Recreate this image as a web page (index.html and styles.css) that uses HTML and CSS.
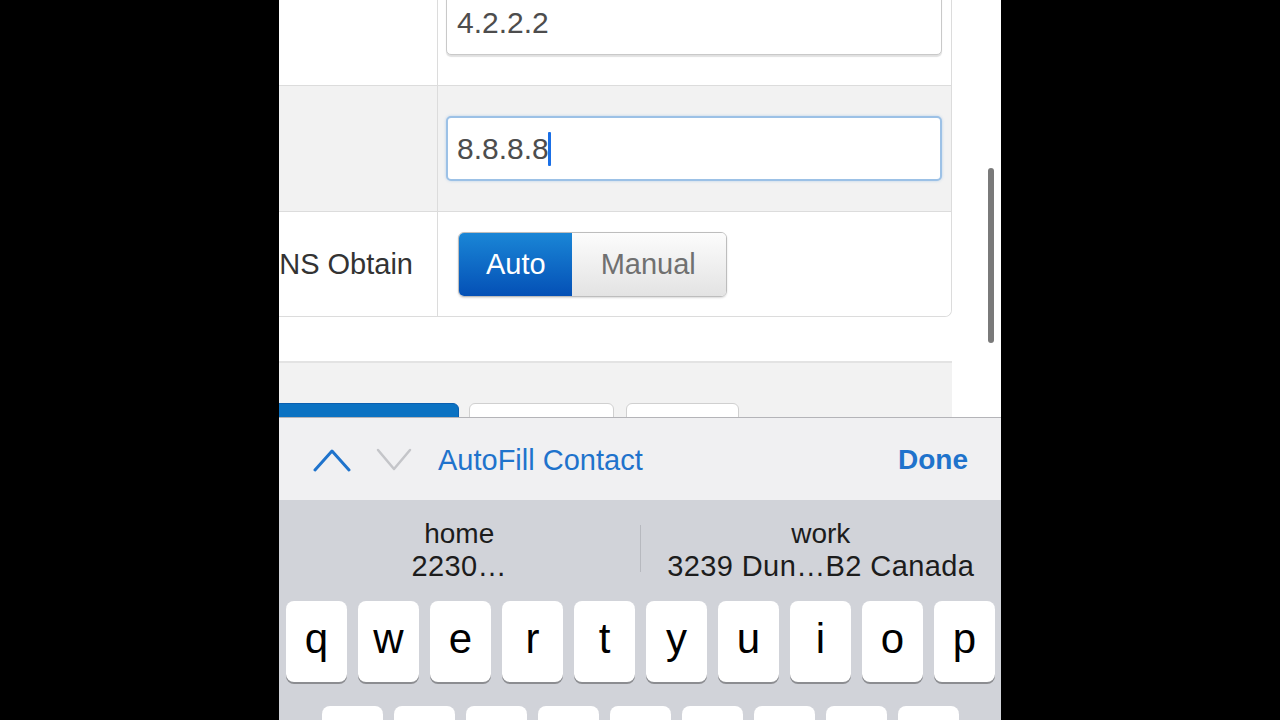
FILE: index.html
```html
<!DOCTYPE html>
<html lang="en">
<head>
    <meta charset="UTF-8">
    <meta name="viewport" content="width=device-width, initial-scale=1.0">
    <title>DNS Settings</title>
    <link rel="stylesheet" href="styles.css">
</head>
<body>
    <div class="screen">
        <div class="page">
            <div class="page-inner">
                <div class="form-table">
                    <div class="row">
                        <div class="label"></div>
                        <div class="field">
                            <div class="input">4.2.2.2</div>
                        </div>
                    </div>
                    <div class="row row-alt">
                        <div class="label"></div>
                        <div class="field">
                            <div class="input input-focus">8.8.8.8<span class="caret"></span></div>
                        </div>
                    </div>
                    <div class="row row-last">
                        <div class="label"><span>DNS Obtain</span></div>
                        <div class="field field-short">
                            <div class="segmented">
                                <span class="seg seg-on">Auto</span>
                                <span class="seg seg-manual">Manual</span>
                            </div>
                        </div>
                    </div>
                </div>

                <div class="actions">
                    <span class="btn btn-primary"></span>
                    <span class="btn btn-wide"></span>
                    <span class="btn btn-small"></span>
                </div>
            </div>
            <div class="scrollbar"></div>
        </div>

        <div class="accessory">
            <svg class="chevron" width="38" height="24" viewBox="0 0 38 24">
                <polyline points="2,22 19,3 36,22" fill="none" stroke="#1f73cc" stroke-width="3" stroke-linecap="round" stroke-linejoin="round"/>
            </svg>
            <svg class="chevron chevron-down" width="36" height="24" viewBox="0 0 36 24">
                <polyline points="2,2 18,21 34,2" fill="none" stroke="#c4c5c9" stroke-width="2.5" stroke-linecap="round" stroke-linejoin="round"/>
            </svg>
            <span class="autofill">AutoFill Contact</span>
            <span class="done">Done</span>
        </div>

        <div class="suggestions">
            <div class="suggestion">
                <div>home</div>
                <div class="address">2230…</div>
            </div>
            <div class="divider"></div>
            <div class="suggestion">
                <div>work</div>
                <div class="address">3239 Dun…B2 Canada</div>
            </div>
        </div>

        <div class="keyboard">
            <div class="key-row">
                <span class="key">q</span>
                <span class="key">w</span>
                <span class="key">e</span>
                <span class="key">r</span>
                <span class="key">t</span>
                <span class="key">y</span>
                <span class="key">u</span>
                <span class="key">i</span>
                <span class="key">o</span>
                <span class="key">p</span>
            </div>
            <div class="key-row key-row-second">
                <span class="key">a</span>
                <span class="key">s</span>
                <span class="key">d</span>
                <span class="key">f</span>
                <span class="key">g</span>
                <span class="key">h</span>
                <span class="key">j</span>
                <span class="key">k</span>
                <span class="key">l</span>
            </div>
        </div>
    </div>
</body>
</html>
```

FILE: styles.css
```css
body {
    margin: 0;
    padding: 0;
    background-color: #000;
    font-family: 'Liberation Sans', Arial, sans-serif;
}
.screen {
    width: 722px;
    height: 720px;
    margin: 0 auto;
    overflow: hidden;
    display: flex;
    flex-direction: column;
    background-color: #fff;
}
.page {
    position: relative;
    height: 417px;
    flex-shrink: 0;
    overflow: hidden;
    background-color: #fff;
}
.page-inner {
    width: 673px;
    margin-top: -40px;
}
.form-table {
    border-right: 1px solid #dcdcdc;
    border-bottom: 1px solid #dcdcdc;
    border-bottom-right-radius: 7px;
    overflow: hidden;
}
.row {
    display: grid;
    grid-template-columns: 159px 1fr;
    border-bottom: 1px solid #dcdcdc;
    background-color: #fff;
}
.row-alt {
    background-color: #f2f2f2;
}
.row-last {
    border-bottom: none;
}
.label {
    border-right: 1px solid #dcdcdc;
    display: flex;
    align-items: center;
    justify-content: flex-end;
    padding-right: 24px;
    overflow: hidden;
    white-space: nowrap;
    font-size: 29px;
    color: #333;
}
.label span {
    flex-shrink: 0;
}
.field {
    padding: 30px 9px 30px 8px;
}
.field-short {
    padding: 20px 9px 19px 20px;
}
.input {
    height: 65px;
    box-sizing: border-box;
    border: 1px solid #c9c9c9;
    border-radius: 5px;
    background-color: #fff;
    box-shadow: 0 2px 1px rgba(0, 0, 0, 0.12);
    padding-left: 10px;
    display: flex;
    align-items: center;
    font-size: 30px;
    color: #4d4d4d;
}
.input-focus {
    border: 2px solid #9cc1e6;
    padding-left: 9px;
    box-shadow: 0 0 3px rgba(80, 150, 220, 0.35);
}
.caret {
    display: inline-block;
    width: 3px;
    height: 34px;
    margin-left: -1px;
    background-color: #1a6fe6;
    border-radius: 1px;
}
.segmented {
    display: inline-flex;
    height: 65px;
    box-sizing: border-box;
    border: 1px solid #bdbdbd;
    border-radius: 6px;
    overflow: hidden;
    box-shadow: 0 1px 2px rgba(0, 0, 0, 0.15);
}
.seg {
    display: flex;
    align-items: center;
    padding: 0 26px 0 27px;
    font-size: 29px;
    color: #707070;
    background: linear-gradient(#fcfcfc, #e3e3e3);
}
.seg-manual {
    padding: 0 30px 0 29px;
}
.seg-on {
    color: #fff;
    background: linear-gradient(#1a86d6, #0450b6);
}
.actions {
    margin-top: 44px;
    height: 120px;
    background-color: #f2f2f2;
    border-top: 2px solid #e3e3e3;
    padding-top: 40px;
    display: flex;
    align-items: flex-start;
    gap: 10px;
}
.btn {
    display: block;
    height: 40px;
    box-sizing: border-box;
    border: 1px solid #d0d0d0;
    border-radius: 6px;
    background-color: #fff;
}
.btn-primary {
    width: 200px;
    margin-left: -20px;
    border-color: #0a5fb0;
    background-color: #0b72c2;
}
.btn-wide {
    width: 145px;
}
.btn-small {
    width: 113px;
    margin-left: 2px;
}
.scrollbar {
    position: absolute;
    left: 709px;
    top: 168px;
    width: 6px;
    height: 175px;
    border-radius: 3px;
    background-color: #7a7a7a;
}
.accessory {
    height: 83px;
    flex-shrink: 0;
    box-sizing: border-box;
    border-top: 1px solid #b4b4b8;
    background-color: #f0f0f2;
    display: flex;
    align-items: center;
    padding: 2px 33px 0 34px;
}
.chevron {
    display: block;
}
.chevron-down {
    margin-left: 25px;
}
.autofill {
    margin-left: 26px;
    font-size: 29px;
    color: #1f73cc;
}
.done {
    margin-left: auto;
    font-size: 28px;
    font-weight: bold;
    color: #1f73cc;
}
.suggestions {
    height: 97px;
    flex-shrink: 0;
    background-color: #d1d3d9;
    display: flex;
    align-items: center;
}
.suggestion {
    flex: 1;
    text-align: center;
    font-size: 28px;
    line-height: 32px;
    color: #1c1c1c;
    padding-top: 2px;
}
.address {
    font-size: 29px;
    letter-spacing: 0.4px;
}
.divider {
    width: 1px;
    height: 47px;
    background-color: #b7b9bf;
}
.keyboard {
    flex: 1;
    background-color: #d1d3d9;
    padding-top: 4px;
}
.key-row {
    display: flex;
    gap: 11px;
    padding-left: 7px;
}
.key-row-second {
    margin-top: 24px;
    padding-left: 43px;
}
.key {
    width: 61px;
    height: 81px;
    box-sizing: border-box;
    padding-bottom: 6px;
    border-radius: 8px;
    background-color: #fff;
    box-shadow: 0 2px 0 #8c8d91;
    display: flex;
    align-items: center;
    justify-content: center;
    font-size: 42px;
    color: #000;
}
```
